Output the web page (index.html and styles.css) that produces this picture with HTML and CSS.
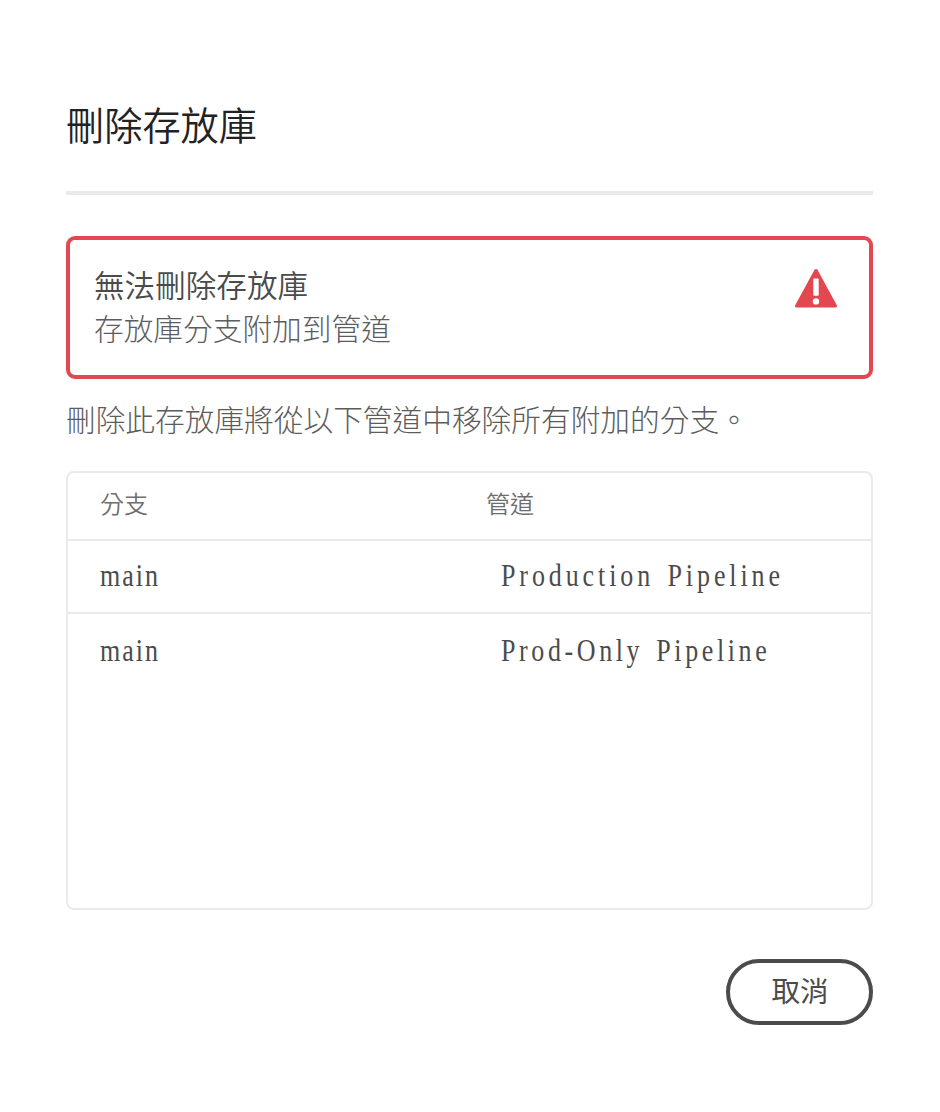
FILE: index.html
```html
<!DOCTYPE html>
<html lang="zh-Hant">
<head>
<meta charset="utf-8">
<title>刪除存放庫</title>
<link rel="stylesheet" href="styles.css">
</head>
<body>
<main class="dialog">
  <h1 class="title">刪除存放庫</h1>
  <hr class="divider">
  <section class="alert">
    <div class="alert-copy">
      <h2 class="alert-title">無法刪除存放庫</h2>
      <p class="alert-text">存放庫分支附加到管道</p>
    </div>
    <svg class="alert-icon" viewBox="0 0 44 40" aria-hidden="true">
      <path fill="#e34850" d="M20.500 1.800a1.750 1.750 0 0 1 3 0L42.800 37.200a1.500 1.500 0 0 1-1.300 2.300H2.500a1.500 1.500 0 0 1-1.300-2.300z"/>
      <rect x="19.300" y="10.600" width="5.400" height="17.200" rx="1" fill="#fff"/>
      <circle cx="22" cy="33.400" r="3.200" fill="#fff"/>
    </svg>
  </section>
  <p class="description">刪除此存放庫將從以下管道中移除所有附加的分支。</p>
  <div class="table" role="table">
    <div class="row head" role="row"><span role="columnheader">分支</span><span role="columnheader">管道</span></div>
    <div class="row" role="row"><span class="value" role="cell">main</span><span class="value pipeline" role="cell">Production Pipeline</span></div>
    <div class="row" role="row"><span class="value" role="cell">main</span><span class="value pipeline prod-only" role="cell">Prod-Only Pipeline</span></div>
  </div>
  <footer class="actions"><button class="cancel">取消</button></footer>
</main>
</body>
</html>
```
FILE: styles.css
```css
* { box-sizing: border-box; }
body { margin: 0; background: #fff; color: #4b4b4b; font-family: "Liberation Sans", "Noto Sans CJK TC", sans-serif; }
h1, h2, p { margin: 0; font-weight: 300; }
.dialog { width: 940px; height: 1112px; padding: 97px 67px 0 66px; }
.title { height: 94px; font-size: 38.200px; font-weight: 350; line-height: 60px; color: #222; }
.divider { height: 4px; margin: 0; border: 0; background: #eaeaea; }
.alert { display: flex; justify-content: space-between; height: 143px; margin-top: 41px; padding: 25px 31px 0 24px; border: 4px solid #e34850; border-radius: 9px; }
.alert-title { font-size: 30.600px; font-weight: 350; line-height: 43px; }
.alert-text { font-size: 29.700px; line-height: 43px; color: #5c5c5c; }
.alert-icon { width: 44px; height: 40px; margin-top: 3px; }
.description { height: 92px; padding-top: 20px; font-size: 29.700px; line-height: 44px; color: #5c5c5c; white-space: nowrap; }
.table { height: 439px; border: 2px solid #eaeaea; border-radius: 8px; }
.row { display: grid; grid-template-columns: 386px 1fr; align-items: center; height: 73.500px; padding-left: 32px; border-bottom: 2px solid #eaeaea; }
.row:last-child { border-bottom: 0; }
.head { height: 67.500px; padding-bottom: 7px; font-size: 24px; font-weight: 350; color: #6e6e6e; }
/* Tall, narrow, widely tracked lettering for branch and pipeline names */
.value { font: 400 26px "Liberation Serif", serif; letter-spacing: 2px; color: #4b4b4b; white-space: nowrap; transform: scaleY(1.22); }
.pipeline { padding-left: 15px; letter-spacing: 3.900px; word-spacing: 3px; }
.prod-only { letter-spacing: 3.600px; }
.actions { display: flex; justify-content: flex-end; margin-top: 49px; }
.cancel { width: 147px; height: 66px; padding: 0 0 5px 1px; border: 4px solid #4b4b4b; border-radius: 33px; background: #fff; color: #4b4b4b; font: 400 28.500px "Liberation Sans", "Noto Sans CJK TC", sans-serif; }
```
